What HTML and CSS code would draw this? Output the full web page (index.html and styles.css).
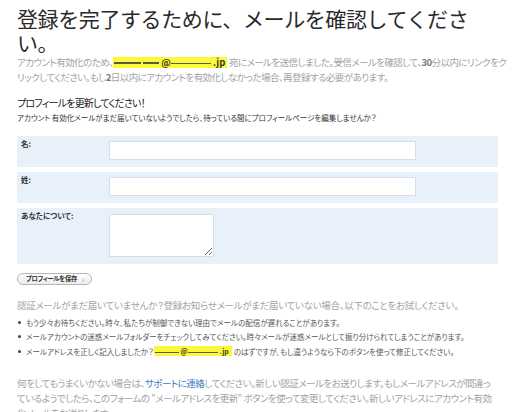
FILE: index.html
```html
<!DOCTYPE html>
<html lang="ja">
<head>
<meta charset="utf-8">
<title>メール確認</title>
<link rel="stylesheet" href="styles.css">
</head>
<body>
<div class="page">
  <h1 class="title">登録を完了するために、メールを確認してくださ<br>い。</h1>
  <p class="intro">アカウント有効化のため、<span class="mail"><span class="scrawl s1"></span><span class="scrawl s2"></span>@<span class="scrawl s3"></span>.jp</span> 宛にメールを送信しました。受信メールを確認して、<b>30</b>分以内にリンクをク<br>リックしてください。もし<b>2</b>日以内にアカウントを有効化しなかった場合、再登録する必要があります。</p>

  <h2 class="sub-title">プロフィールを更新してください！</h2>
  <p class="sub-note">アカウント 有効化メールがまだ届いていないようでしたら、待っている間にプロフィールページを編集しませんか？</p>

  <form class="profile-form">
    <div class="row">
      <label class="label">名:</label>
      <input class="field" type="text">
    </div>
    <div class="row">
      <label class="label">姓:</label>
      <input class="field" type="text">
    </div>
    <div class="row row-tall">
      <label class="label">あなたについて:</label>
      <textarea class="area"></textarea>
    </div>
    <button class="save" type="button">プロフィールを保存<span class="arrow">›</span></button>
  </form>

  <p class="help">認証メールがまだ届いていませんか？登録お知らせメールがまだ届いていない場合、以下のことをお試しください。</p>
  <ul class="tips">
    <li>もう少々お待ちください。時々、私たちが制御できない理由でメールの配信が遅れることがあります。</li>
    <li>メールアカウントの迷惑メールフォルダーをチェックしてみてください。時々メールが迷惑メールとして振り分けられてしまうことがあります。</li>
    <li>メールアドレスを正しく記入しましたか？ <span class="mail mail-small"><span class="scrawl s4"></span>@<span class="scrawl s5"></span>.jp</span> のはずですが、もし違うようなら下のボタンを使って修正してください。</li>
  </ul>
  <p class="help last">何をしてもうまくいかない場合は、<a class="link" href="#">サポートに連絡</a>してください。新しい認証メールをお送りします。もしメールアドレスが間違っ<br>ているようでしたら、このフォームの "メールアドレスを更新" ボタンを使って変更してください。新しいアドレスにアカウント有効<br>化メールをお送りします。</p>
</div>
</body>
</html>
```

FILE: styles.css
```css
html, body {
  margin: 0;
  padding: 0;
  background: #ffffff;
  overflow: hidden;
}

body {
  font-family: "Noto Sans CJK JP", "Noto Sans", sans-serif;
  color: #333333;
}

.page {
  padding: 0 3px 0 17px;
}

.title {
  margin: 0;
  padding-top: 6px;
  font-size: 21px;
  line-height: 24px;
  font-weight: normal;
  color: #2a2a2a;
  letter-spacing: -0.4px;
  white-space: nowrap;
}

.intro {
  margin: 1px 0 0;
  font-size: 9.5px;
  line-height: 15px;
  letter-spacing: -0.55px;
  color: #a2a2a2;
  font-feature-settings: "palt";
  white-space: nowrap;
}

.intro b {
  color: #777;
}

.mail {
  display: inline-block;
  background: #fbf93a;
  color: #3a3a20;
  font-weight: bold;
  line-height: 11px;
  height: 11px;
  padding: 0 2px 0 1px;
  letter-spacing: 0;
  vertical-align: 0;
  white-space: nowrap;
}

.scrawl {
  display: inline-block;
  height: 2px;
  background: #5a5a40;
  vertical-align: middle;
  margin-right: 2px;
}

.s1 { width: 27px; }
.s2 { width: 16px; }
.s3 { width: 40px; height: 1px; }
.s4 { width: 24px; height: 1px; }
.s5 { width: 30px; height: 1px; }

.sub-title {
  margin: 11px 0 0;
  font-size: 10px;
  line-height: 14px;
  letter-spacing: -0.8px;
  font-weight: normal;
  color: #222;
  font-feature-settings: "palt";
}

.sub-note {
  margin: 2px 0 0;
  font-size: 7.5px;
  line-height: 12px;
  color: #333;
  font-feature-settings: "palt";
  white-space: nowrap;
}

.profile-form {
  margin-top: 12px;
  width: 481px;
  display: flex;
  flex-direction: column;
  gap: 5px;
}

.row {
  display: flex;
  align-items: flex-start;
  height: 31px;
  background: #e8f1fa;
}

.row-tall {
  height: 56px;
}

.label {
  width: 88px;
  padding: 2px 0 0 4px;
  font-size: 7.5px;
  line-height: 12px;
  font-weight: bold;
  color: #333;
  font-feature-settings: "palt";
}

.field {
  box-sizing: border-box;
  width: 307px;
  height: 19px;
  margin: 5px 0 0;
  padding: 0 3px;
  border: 1px solid #d3dfeb;
  background: #ffffff;
  outline: none;
}

.area {
  box-sizing: border-box;
  width: 105px;
  height: 43px;
  margin: 6px 0 0;
  padding: 2px;
  border: 1px solid #d3dfeb;
  background: #ffffff;
  resize: both;
  outline: none;
}

.save {
  align-self: flex-start;
  box-sizing: border-box;
  width: 75px;
  height: 12px;
  margin-top: 4px;
  padding: 0 0 0 8px;
  display: flex;
  align-items: center;
  gap: 5px;
  white-space: nowrap;
  border: 1px solid #b5b5b5;
  border-radius: 6px;
  background: linear-gradient(#ffffff, #ececec);
  font-family: inherit;
  font-size: 6.3px;
  font-weight: bold;
  color: #333;
  line-height: 10px;
  letter-spacing: -0.3px;
  font-feature-settings: "palt";
}

.arrow {
  font-size: 7px;
  color: #888;
  font-weight: normal;
}

.help {
  margin: 13px 0 0;
  font-size: 9.5px;
  line-height: 15px;
  letter-spacing: -0.3px;
  color: #a2a2a2;
  font-feature-settings: "palt";
  white-space: nowrap;
}

.tips {
  list-style: none;
  margin: 2px 0 0;
  padding: 0;
}

.tips li {
  display: flex;
  align-items: center;
  font-size: 7.5px;
  line-height: 15px;
  height: 14.5px;
  color: #555;
  font-feature-settings: "palt";
  white-space: nowrap;
}

.tips li::before {
  content: "";
  width: 3px;
  height: 3px;
  border-radius: 50%;
  background: #444;
  margin: 0 5px 0 1px;
  flex: none;
}

.mail-small {
  height: 10px;
  line-height: 10px;
  font-size: 7px;
  padding: 0 3px 0 1px;
  margin-right: 2px;
}

.help.last {
  margin-top: 17px;
  letter-spacing: -0.5px;
}

.link {
  color: #3b78bf;
  text-decoration: none;
}
```
